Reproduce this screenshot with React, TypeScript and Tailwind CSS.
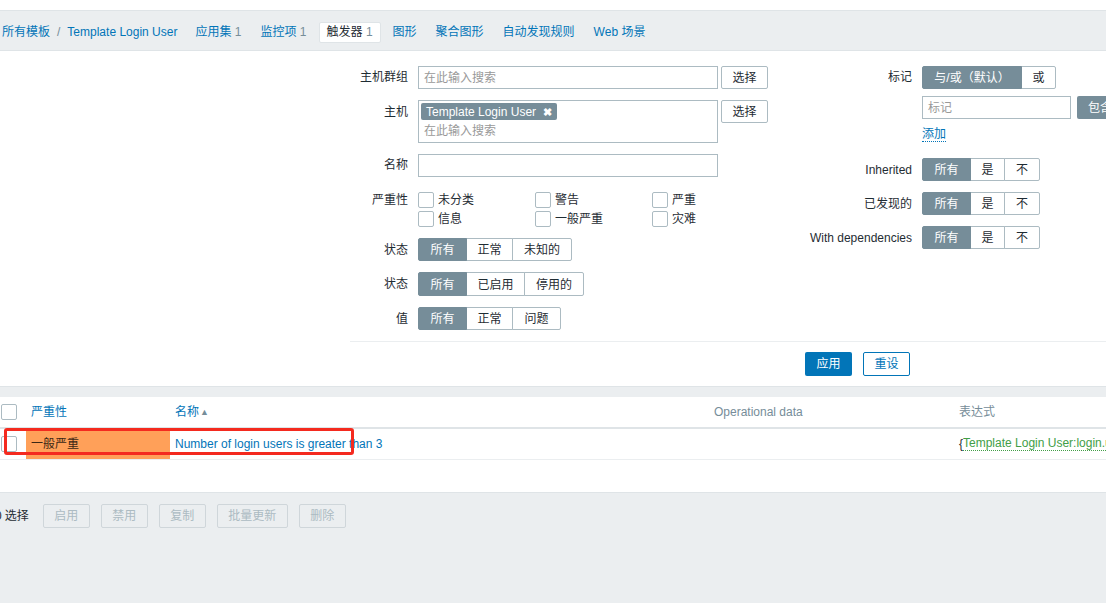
import React from "react";

type SegItem = { t: string; w: string };

function Seg({ items, active = 0, h = "h-[23px]" }: { items: SegItem[]; active?: number; h?: string }) {
  return (
    <div className={`flex ${h}`}>
      {items.map((it, i) => {
        const isA = i === active;
        const first = i === 0;
        const last = i === items.length - 1;
        return (
          <div
            key={i}
            className={[
              it.w,
              "flex items-center justify-center border pt-[1px]",
              first ? "rounded-l-[2px]" : "-ml-px",
              last ? "rounded-r-[2px]" : "",
              isA ? "bg-[#768d99] border-[#768d99] text-white relative z-10" : "bg-white border-[#acbbc2] text-[#1f2c33]",
            ].join(" ")}
          >
            {it.t}
          </div>
        );
      })}
    </div>
  );
}

function Box({ cls = "" }: { cls?: string }) {
  return <div className={`w-[16px] h-[16px] border border-[#acbbc2] rounded-[2px] bg-white shrink-0 ${cls}`} />;
}

function Label({ children, cls = "h-[23px] leading-[23px]" }: { children: React.ReactNode; cls?: string }) {
  return <div className={`w-[58px] mr-[10px] text-right text-[#1f2c33] shrink-0 whitespace-nowrap ${cls}`}>{children}</div>;
}

function RLabel({ children, cls = "h-[23px] leading-[23px]" }: { children: React.ReactNode; cls?: string }) {
  return <div className={`w-[132px] mr-[10px] text-right text-[#1f2c33] shrink-0 whitespace-nowrap ${cls}`}>{children}</div>;
}

function SelBtn() {
  return (
    <div className="ml-[3px] w-[47px] h-[23px] border border-[#acbbc2] rounded-[2px] bg-white flex items-center justify-center text-[#1f2c33]">
      选择
    </div>
  );
}

export default function App() {
  const font = "font-['Liberation_Sans','Noto_Sans_CJK_SC',sans-serif]";
  const sevs = ["未分类", "警告", "严重", "信息", "一般严重", "灾难"];
  const yesNo: SegItem[] = [
    { t: "所有", w: "w-[49px]" },
    { t: "是", w: "w-[35px]" },
    { t: "不", w: "w-[36px]" },
  ];
  return (
    <div className={`w-[1106px] h-[603px] overflow-hidden bg-white text-[12px] leading-[14px] ${font}`}>
      <div className="h-[10px]" />
      {/* nav bar */}
      <div className="h-[41px] bg-[#ebeef0] border-y border-[#dfe4e7] flex items-center pt-[3px] whitespace-nowrap">
        <div className="flex items-center pl-[2px]">
          <span className="text-[#0275b8]">所有模板</span>
          <span className="text-[#768d99] mx-[7px]">/</span>
          <span className="text-[#0275b8]">Template Login User</span>
        </div>
        <div className="flex items-center gap-[5px] ml-[11px]">
          <span className="px-[7px]"><span className="text-[#0275b8]">应用集</span> <span className="text-[#768d99]">1</span></span>
          <span className="px-[7px]"><span className="text-[#0275b8]">监控项</span> <span className="text-[#768d99]">1</span></span>
          <span className="px-[7px] h-[21px] flex items-center bg-white border border-[#dfe4e7] rounded-[2px]">
            <span className="text-[#1f2c33]">触发器</span>&nbsp;<span className="text-[#768d99]">1</span>
          </span>
          <span className="px-[7px] text-[#0275b8]">图形</span>
          <span className="px-[7px] text-[#0275b8]">聚合图形</span>
          <span className="px-[7px] text-[#0275b8]">自动发现规则</span>
          <span className="px-[7px] text-[#0275b8]">Web 场景</span>
        </div>
      </div>

      {/* filter */}
      <div className="ml-[350px]">
        <div className="flex pt-[15px] pb-[11px] border-b border-[#ebeef0]">
          {/* left column */}
          <div className="w-[418px] flex flex-col">
            <div className="flex">
              <Label>主机群组</Label>
              <div className="w-[300px] h-[23px] border border-[#acbbc2] px-[5px] flex items-center text-[#999999]">在此输入搜索</div>
              <SelBtn />
            </div>
            <div className="flex mt-[11px]">
              <Label cls="h-[23px] leading-[23px] pt-[1px]">主机</Label>
              <div className="w-[300px] h-[43px] border border-[#acbbc2] p-[2px] flex flex-col items-start">
                <div className="h-[17px] bg-[#768d99] rounded-[2px] text-white px-[5px] flex items-center">
                  <span>Template Login User</span>
                  <span className="ml-[7px] text-[11px] font-bold">✖</span>
                </div>
                <div className="mt-[4px] pl-[3px] text-[#999999]">在此输入搜索</div>
              </div>
              <SelBtn />
            </div>
            <div className="flex mt-[11px]">
              <Label>名称</Label>
              <div className="w-[300px] h-[23px] border border-[#acbbc2]" />
            </div>
            <div className="flex mt-[15px]">
              <Label cls="h-[16px] leading-[16px]">严重性</Label>
              <div className="grid grid-cols-[117px_117px_117px] gap-y-[3px]">
                {sevs.map((s) => (
                  <div key={s} className="flex items-center h-[16px]">
                    <Box />
                    <span className="ml-[4px] text-[#1f2c33] whitespace-nowrap">{s}</span>
                  </div>
                ))}
              </div>
            </div>
            <div className="flex mt-[11px]">
              <Label cls="h-[23px] leading-[23px] pt-[1px]">状态</Label>
              <Seg items={[{ t: "所有", w: "w-[49px]" }, { t: "正常", w: "w-[47px]" }, { t: "未知的", w: "w-[60px]" }]} />
            </div>
            <div className="flex mt-[11px]">
              <Label cls="h-[24px] leading-[24px]">状态</Label>
              <Seg h="h-[24px]" items={[{ t: "所有", w: "w-[49px]" }, { t: "已启用", w: "w-[59px]" }, { t: "停用的", w: "w-[60px]" }]} />
            </div>
            <div className="flex mt-[11px]">
              <Label cls="h-[23px] leading-[23px] pt-[1px]">值</Label>
              <Seg items={[{ t: "所有", w: "w-[49px]" }, { t: "正常", w: "w-[47px]" }, { t: "问题", w: "w-[49px]" }]} />
            </div>
          </div>
          {/* right column */}
          <div className="ml-[12px] flex flex-col">
            <div className="flex">
              <RLabel>标记</RLabel>
              <Seg items={[{ t: "与/或（默认）", w: "w-[100px]" }, { t: "或", w: "w-[35px]" }]} />
            </div>
            <div className="flex mt-[7px]">
              <div className="w-[142px] shrink-0" />
              <div className="w-[149px] h-[23px] border border-[#acbbc2] px-[5px] flex items-center text-[#999999] shrink-0">标记</div>
              <div className="ml-[6px] px-[11px] h-[23px] bg-[#768d99] rounded-[2px] text-white flex items-center shrink-0">包含</div>
            </div>
            <div className="flex mt-[7px]">
              <div className="w-[142px] shrink-0" />
              <span className="h-[16px] leading-[16px] text-[#0275b8] border-b border-dotted border-[#0275b8]">添加</span>
            </div>
            <div className="flex mt-[16px]">
              <RLabel cls="h-[23px] leading-[23px] pt-[1px]">Inherited</RLabel>
              <Seg items={yesNo} />
            </div>
            <div className="flex mt-[11px]">
              <RLabel cls="h-[23px] leading-[23px] pt-[1px]">已发现的</RLabel>
              <Seg items={yesNo} />
            </div>
            <div className="flex mt-[11px]">
              <RLabel cls="h-[23px] leading-[23px] pt-[1px]">With dependencies</RLabel>
              <Seg items={yesNo} />
            </div>
          </div>
        </div>
        <div className="flex pt-[10px] pb-[10px] pl-[455px]">
          <div className="w-[47px] h-[24px] bg-[#0275b8] rounded-[2px] text-white flex items-center justify-center">应用</div>
          <div className="ml-[11px] w-[47px] h-[24px] bg-white border border-[#0275b8] rounded-[2px] text-[#0275b8] flex items-center justify-center">重设</div>
        </div>
      </div>

      {/* gray strip */}
      <div className="h-[11px] bg-[#ebeef0] border-t border-[#dfe4e7]" />

      {/* table */}
      <div className="whitespace-nowrap">
        <div className="flex h-[32px] items-center border-b-2 border-[#dfe4e7]">
          <div className="w-[26px] pl-[1px] shrink-0"><Box /></div>
          <div className="w-[144px] pl-[5px] shrink-0 text-[#0275b8]">严重性</div>
          <div className="w-[539px] pl-[5px] shrink-0 text-[#0275b8] flex items-center">
            名称<span className="text-[#768d99] text-[9px] ml-[1px]">▲</span>
          </div>
          <div className="w-[245px] pl-[5px] shrink-0 text-[#768d99]">Operational data</div>
          <div className="w-[300px] pl-[5px] shrink-0 text-[#768d99]">表达式</div>
        </div>
        <div className="relative flex h-[31px] border-b border-[#ebeef0]">
          <div className="w-[26px] pl-[1px] shrink-0 flex items-center"><Box /></div>
          <div className="w-[144px] pl-[5px] shrink-0 bg-[#ffa059] text-[#3b2716] flex items-center">一般严重</div>
          <div className="w-[539px] pl-[5px] shrink-0 text-[#0275b8] flex items-center">Number of login users is greater than 3</div>
          <div className="w-[245px] shrink-0" />
          <div className="w-[300px] pl-[5px] shrink-0 flex items-center">
            <span className="text-[#1f2c33]">{"{"}</span>
            <span className="text-[#429e47] border-b border-dotted border-[#429e47] leading-[13px]">Template Login User:login.users.last()</span>
            <span className="text-[#1f2c33]">{"}>3"}</span>
          </div>
          <div className="absolute left-[4px] top-[-1px] w-[350px] h-[27px] border-[3px] border-[#f42a1f] rounded-[3px] pointer-events-none" />
        </div>
        <div className="h-[32px]" />
      </div>

      {/* footer */}
      <div className="h-[200px] bg-[#ebeef0] border-t border-[#dfe4e7] pt-[11px] flex items-start whitespace-nowrap">
        <div className="h-[24px] flex items-center text-[#1f2c33]">
          <span className="-ml-[5px]">0</span>
          <span className="ml-[3px]">选择</span>
        </div>
        <div className="flex ml-[14px] gap-[11px]">
          {[
            { t: "启用", w: "w-[47px]" },
            { t: "禁用", w: "w-[47px]" },
            { t: "复制", w: "w-[47px]" },
            { t: "批量更新", w: "w-[71px]" },
            { t: "删除", w: "w-[47px]" },
          ].map((b) => (
            <div key={b.t} className={`${b.w} h-[24px] border border-[#cfd6da] rounded-[2px] bg-[#ebeef0] text-[#acbbc2] flex items-center justify-center`}>
              {b.t}
            </div>
          ))}
        </div>
      </div>
    </div>
  );
}
